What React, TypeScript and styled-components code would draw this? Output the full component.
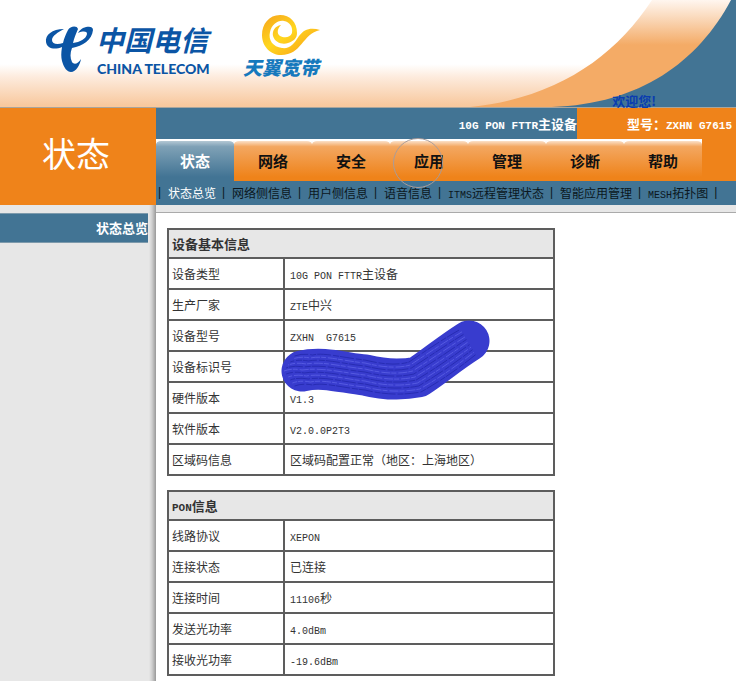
import React from "react";
import styled, { createGlobalStyle, css } from "styled-components";

const Global = createGlobalStyle`
  * { box-sizing: border-box; }
  html, body, #root { height: 100%; }
  body {
    margin: 0;
    background: #fff;
    color: #333;
    font: 12px/16px "Noto Sans CJK SC", sans-serif;
    overflow-x: hidden;
  }
  a { color: inherit; text-decoration: none; }
`;

const Page = styled.div`
  position: relative;
  display: flex;
  flex-direction: column;
  min-height: 100%;
`;

const Header = styled.header`
  position: relative;
  display: flex;
  align-items: flex-start;
  height: 108px;
  background: linear-gradient(#fff 60%, #fdebdd 72%, #f8c99f 98%);
  border-bottom: 1px solid #a9a59c;
`;

const TelecomLogo = styled.svg`
  width: 170px;
  height: 60px;
  margin: 22px 0 0 44px;
`;

const TianyiLogo = styled.svg`
  width: 80px;
  height: 70px;
  margin: 12px 0 0 28px;
`;

const Swoosh = styled.svg`
  position: absolute;
  right: 0;
  top: 0;
  width: 276px;
  height: 107px;
`;

const Welcome = styled.strong`
  position: absolute;
  right: 80px;
  bottom: -2px;
  color: #0a3cb0;
  font-size: 13px;
  line-height: 16px;
`;

const Banner = styled.div`
  display: grid;
  grid-template-columns: 156px 1fr;
  height: 97px;
  background: #ef831a;
`;

const SectionTitle = styled.h1`
  margin: 0;
  display: flex;
  align-items: center;
  justify-content: center;
  color: #fff;
  font-size: 34px;
  font-weight: 400;
  line-height: 40px;
  padding: 0 4px 8px 0;
`;

const BannerMain = styled.div`
  display: flex;
  flex-direction: column;
  min-width: 0;
`;

const InfoRow = styled.div`
  display: flex;
  height: 31px;
  color: #fff;
  font-size: 13px;
  font-weight: 700;
  line-height: 32px;
  text-align: right;
  white-space: pre;
`;

const DeviceName = styled.div`
  flex: 1;
  background: #427494;
`;

const Model = styled.div`
  width: 159px;
  padding-right: 4px;
`;

const Latin = styled.span<{ $large?: boolean }>`
  font-family: "Liberation Mono", monospace;
  font-size: ${(p) => (p.$large ? 11 : 10)}px;
  line-height: 1;
`;

const Tabs = styled.nav`
  display: flex;
  height: 42px;
`;

const TabBacking = styled.div`
  display: flex;
  background: linear-gradient(#fff 6px, transparent 6px);
`;

const Tab = styled.a<{ $active?: boolean }>`
  width: 78px;
  border-top: 2px solid #fff;
  border-radius: 5px 5px 0 0;
  text-align: center;
  font-size: 15px;
  font-weight: 700;
  line-height: 40px;
  color: #111;
  background: linear-gradient(#fbe0c8, #f3a761 14%, #ef831a 90%);
  ${(p) =>
    p.$active &&
    css`
      color: #fff;
      background: linear-gradient(#b4c8d4, #7fa1b6 14%, #427494 90%);
    `}
`;

const Cursor = styled.span`
  position: absolute;
  left: 393px;
  top: 138px;
  width: 50px;
  height: 50px;
  border: 1px solid #a99c9a;
  border-radius: 50%;
  pointer-events: none;
`;

const SubNav = styled.nav`
  display: flex;
  flex: 1;
  padding-left: 2px;
  background: #427494;
  color: #0b1720;
  line-height: 23px;
  white-space: nowrap;
`;

const SubLink = styled.a<{ $active?: boolean }>`
  padding: 0 6px;
  color: ${(p) => (p.$active ? "#fff" : "#0b1720")};
`;

const Separator = styled.span`
  width: 4px;
  font-family: "Liberation Sans", sans-serif;
`;

const Body = styled.div`
  flex: 1;
  display: grid;
  grid-template-columns: 156px 1fr;
`;

const Sidebar = styled.aside`
  padding: 8px 8px 0 0;
  background: linear-gradient(to right, #e7e7e7 calc(100% - 7px), #cfcfcf calc(100% - 4px), #999);
`;

const SideLink = styled.a`
  display: block;
  height: 30px;
  border: solid #7d9aac;
  border-width: 1px 0;
  background: #427494;
  color: #fff;
  font-size: 13px;
  font-weight: 700;
  line-height: 28px;
  text-align: right;
`;

const Content = styled.main`
  border-top: 7px solid #e7e7e7;
  box-shadow: inset 0 1px #aaa;
  padding: 16px 12px 0 11px;
`;

const Table = styled.table`
  width: 388px;
  margin-bottom: 14px;
  border-collapse: collapse;
  table-layout: fixed;

  th, td {
    height: 31px;
    padding: 0 4px 0 3px;
    border: 2px solid #5d5d5d;
    text-align: left;
    font-weight: 400;
    white-space: pre;
  }
  td { padding-left: 5px; }
  thead th {
    height: 29px;
    background: #e7e7e7;
    font-size: 13px;
    font-weight: 700;
  }
`;

const LabelCol = styled.col`
  width: 116px;
`;

const Redacted = styled.td`
  position: relative;
`;

const Scribble = styled.svg`
  position: absolute;
  left: -4px;
  top: -32px;
  width: 210px;
  height: 82px;
`;

const tabs = ["状态", "网络", "安全", "应用", "管理", "诊断", "帮助"];
const subLinks = ["状态总览", "网络侧信息", "用户侧信息", "语音信息", "ITMS远程管理状态", "智能应用管理", "MESH拓扑图"];

const deviceRows = [
  ["设备类型", "10G PON FTTR主设备"],
  ["生产厂家", "ZTE中兴"],
  ["设备型号", "ZXHN  G7615"],
  ["设备标识号", ""],
  ["硬件版本", "V1.3"],
  ["软件版本", "V2.0.0P2T3"],
  ["区域码信息", "区域码配置正常（地区：上海地区）"],
];

const ponRows = [
  ["线路协议", "XEPON"],
  ["连接状态", "已连接"],
  ["连接时间", "11106秒"],
  ["发送光功率", "4.0dBm"],
  ["接收光功率", "-19.6dBm"],
];

function Mixed({ text, large }: { text: string; large?: boolean }) {
  return (
    <>
      {text.split(/([\x20-\x7e]+)/).filter(Boolean).map((part, i) =>
        /^[\x20-\x7e]/.test(part) ? <Latin key={i} $large={large}>{part}</Latin> : part
      )}
    </>
  );
}

const strokeLines = [-15, -12, -9, -6, -3, 0, 3, 6, 9, 12, 15];

function Stroke() {
  return (
    <Scribble viewBox="0 0 210 82" aria-hidden="true">
      <path d="M21 51 C42 46 63 53 84 55 Q112 62 137 57 C155 45 169 33 188 21" fill="none" stroke="#383cce" strokeWidth="41" strokeLinecap="round" strokeLinejoin="round" />
      {strokeLines.map((o, i) => (
        <path
          key={o}
          d={`M${3 + Math.abs(o) * 0.7} ${51 + o} q8 -3 18 -1 C42 ${47 + o} 63 ${53 + o} 84 ${55 + o} Q112 ${62 + o} ${134 + o * 0.4} ${57 + o} C${152 + o * 0.5} ${46 + o} ${168 + o * 0.5} ${35 + o} ${187 + o * 0.5} ${22 + o * 0.85}`}
          fill="none"
          stroke={i % 2 ? "#6166e8" : "#2025a6"}
          strokeWidth="1"
          strokeDasharray={i % 2 ? "5 2 9 1" : "14 2 6 1"}
          strokeDashoffset={i * 5}
          opacity="0.7"
        />
      ))}
    </Scribble>
  );
}

function InfoTable({ title, rows }: { title: string; rows: string[][] }) {
  return (
    <Table>
      <colgroup><LabelCol /><col /></colgroup>
      <thead><tr><th colSpan={2}><Mixed text={title} large /></th></tr></thead>
      <tbody>
        {rows.map(([label, value]) => (
          <tr key={label}>
            <th scope="row">{label}</th>
            {value ? <td><Mixed text={value} /></td> : <Redacted><Stroke /></Redacted>}
          </tr>
        ))}
      </tbody>
    </Table>
  );
}

export default function App() {
  return (
    <Page>
      <Global />
      <Header>
        <TelecomLogo viewBox="0 0 170 60" role="img" aria-label="中国电信 China Telecom">
          <path
            fill="#0b55a5"
            d="M20 7 C8 7 1 13 2 20 C3 27 11 28 18 25 C17 31 17 35 18 39 C20 46 23 50 27 50 C32 50 36 43 37 37 C34 42 30 43 28 40 C26 36 26 31 28 26 C39 24 48 18 49 8 C49 4 44 4 39 6 C37 7 35 9 34 11 C39 9 43 9 43 12 C42 17 36 20 29 21 C30 16 32 12 34 7 C33 3 26 4 24 8 C22 12 20 16 19 21 C13 23 8 22 8 18 C8 14 14 10 20 7Z"
          />
          <text x="52" y="29" fill="#0b55a5" fontFamily="Noto Sans CJK SC, sans-serif" fontSize="28" fontWeight="700" fontStyle="italic">中国电信</text>
          <text x="53" y="52" fill="#0b55a5" fontFamily="Lato, sans-serif" fontSize="14" fontWeight="900">CHINA TELECOM</text>
        </TelecomLogo>
        <TianyiLogo viewBox="0 0 80 70" role="img" aria-label="天翼宽带">
          <defs>
            <linearGradient id="gold" x1="0" y1="0" x2="1" y2="1">
              <stop offset="0" stopColor="#f6a31c" />
              <stop offset="0.45" stopColor="#ffd71f" />
              <stop offset="0.75" stopColor="#fbb41a" />
              <stop offset="1" stopColor="#f28c13" />
            </linearGradient>
          </defs>
          <path
            fill="url(#gold)"
            d="M55 21 C55 10 48 3 38 3 C27 3 20 12 20 23 C20 35 29 43 39 43 C60 43 60 22 78 18 C69 15 62 17 57 24 C52 32 48 37 40 36 C31 35 26 28 28 20 C30 12 36 8 42 9 C48 10 51 15 50 21 C48 26 42 26 38 24 C34 21 36 16 39 13 C33 14 30 19 31 24 C33 31 41 33 46 31 C52 29 55 26 55 21Z"
          />
          <text x="1" y="63" fill="#1679bd" fontFamily="Noto Sans CJK SC, sans-serif" fontSize="19" fontWeight="900" fontStyle="italic">天翼宽带</text>
        </TianyiLogo>
        <Swoosh viewBox="0 0 276 107" aria-hidden="true">
          <defs>
            <linearGradient id="band" x1="0" y1="0" x2="0" y2="1">
              <stop offset="0" stopColor="#fff6ef" />
              <stop offset="0.2" stopColor="#f9d3b0" />
              <stop offset="0.42" stopColor="#f4ab66" />
              <stop offset="1" stopColor="#f4ab66" />
            </linearGradient>
          </defs>
          <path d="M10 107 C96 98 154 58 192 0 H276 V107Z" fill="url(#band)" />
          <path d="M92 107 C180 104 238 62 271 0 H276 V107Z" fill="#427494" />
        </Swoosh>
        <Welcome>欢迎您!</Welcome>
      </Header>
      <Banner>
        <SectionTitle>状态</SectionTitle>
        <BannerMain>
          <InfoRow>
            <DeviceName><Mixed text="10G PON FTTR主设备" large /></DeviceName>
            <Model><Mixed text="型号：ZXHN G7615" large /></Model>
          </InfoRow>
          <Tabs>
            <TabBacking>
              {tabs.map((t, i) => <Tab key={t} href="#" $active={i === 0}>{t}</Tab>)}
            </TabBacking>
          </Tabs>
          <SubNav>
            {subLinks.map((t, i) => (
              <React.Fragment key={t}>
                <Separator>|</Separator>
                <SubLink href="#" $active={i === 0}><Mixed text={t} /></SubLink>
              </React.Fragment>
            ))}
            <Separator>|</Separator>
          </SubNav>
        </BannerMain>
      </Banner>
      <Body>
        <Sidebar><SideLink href="#">状态总览</SideLink></Sidebar>
        <Content>
          <InfoTable title="设备基本信息" rows={deviceRows} />
          <InfoTable title="PON信息" rows={ponRows} />
        </Content>
      </Body>
      <Cursor />
    </Page>
  );
}
